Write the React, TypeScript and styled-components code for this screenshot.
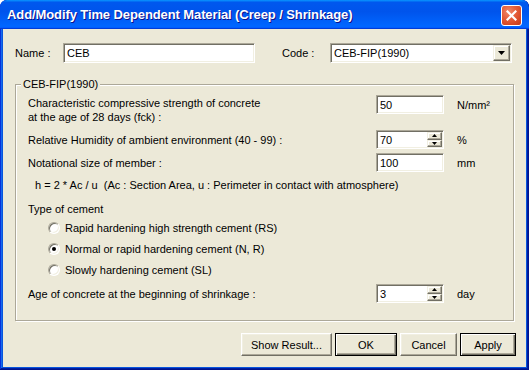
import React from "react";
import styled, { createGlobalStyle, css } from "styled-components";

const FONT = `"Liberation Sans", Arial, sans-serif`;

const Global = createGlobalStyle`
  html, body { margin: 0; padding: 0; background: #ffffff; }
  body { width: 529px; height: 370px; overflow: hidden; }
  * { box-sizing: border-box; }
`;

const Window = styled.div`
  width: 529px;
  height: 370px;
  display: flex;
  flex-direction: column;
  background: #0855dd;
  border-radius: 7px 7px 0 0;
  overflow: hidden;
  box-shadow: inset -1px -1px #00138c, inset 1px 1px #0831d9, inset -2px -2px #001ea0,
    inset 2px 2px #166aee;
  font-family: ${FONT};
  font-size: 11px;
  color: #000;
`;

const TitleBar = styled.div`
  height: 29px;
  flex: none;
  display: flex;
  align-items: center;
  padding: 0 7px 0 7px;
  background: linear-gradient(
    180deg,
    #0997ff,
    #0058ee 8%,
    #0054ec 40%,
    #0066ff 88%,
    #0066ff 93%,
    #005bff 95%,
    #003dd7 96%,
    #003dd7
  );
  border-radius: 7px 7px 0 0;
`;

const Title = styled.div`
  flex: 1;
  color: #fff;
  font-family: ${FONT};
  font-weight: bold;
  font-size: 13px;
  letter-spacing: -0.1px;
  text-shadow: 1px 1px #0f1089;
  white-space: nowrap;
  padding-bottom: 1px;
`;

const CloseButton = styled.div`
  width: 21px;
  height: 21px;
  border: 1px solid #fff;
  border-radius: 3px;
  display: flex;
  align-items: center;
  justify-content: center;
  background: radial-gradient(circle at 35% 30%, #f08a6c 0%, #e5603c 40%, #d84a27 70%, #c13a1a 100%);
  margin-top: 1px;
`;

const Body = styled.div`
  flex: 1;
  margin: 0 3px 3px 3px;
  background: #ece9d8;
  padding: 14px 0 0 12px;
  display: flex;
  flex-direction: column;
`;

const TopRow = styled.div`
  display: flex;
  align-items: center;
  height: 20px;
`;

const Label = styled.div<{ $w?: number; $ml?: number }>`
  width: ${(p) => (p.$w ? `${p.$w}px` : "auto")};
  margin-left: ${(p) => p.$ml ?? 0}px;
  white-space: nowrap;
  line-height: 14px;
`;

const sunken = css`
  background: #fff;
  border: 1px solid;
  border-color: #aca899 #ffffff #ffffff #aca899;
  box-shadow: inset 1px 1px #716f64, inset -1px -1px #f1efe2;
`;

const Edit = styled.div<{ $w: number; $h: number }>`
  ${sunken};
  width: ${(p) => p.$w}px;
  height: ${(p) => p.$h}px;
  display: flex;
  align-items: center;
  padding: 1px 1px 1px 3px;
  white-space: nowrap;
`;

const EditText = styled.span`
  flex: 1;
  line-height: 14px;
`;

const raised = css`
  background: #ece9d8;
  border: 1px solid;
  border-color: #f1efe2 #716f64 #716f64 #f1efe2;
  box-shadow: inset -1px -1px #aca899, inset 1px 1px #ffffff;
`;

const DropButton = styled.div`
  ${raised};
  width: 17px;
  height: 100%;
  display: flex;
  align-items: center;
  justify-content: center;
`;

const SpinColumn = styled.div`
  width: 15px;
  height: 100%;
  display: flex;
  flex-direction: column;
`;

const SpinButton = styled.div`
  ${raised};
  flex: 1;
  display: flex;
  align-items: center;
  justify-content: center;
`;

const Group = styled.div`
  position: relative;
  width: 499px;
  height: 237px;
  margin-top: 21px;
  border: 1px solid #aca899;
  box-shadow: 1px 1px 0 #ffffff, inset 1px 1px 0 #ffffff;
  padding: 10px 0 0 12px;
  display: flex;
  flex-direction: column;
`;

const Legend = styled.div`
  position: absolute;
  top: -8px;
  left: 5px;
  padding: 0 2px;
  background: #ece9d8;
  line-height: 14px;
`;

const FieldRow = styled.div<{ $mt?: number; $top?: boolean }>`
  display: grid;
  grid-template-columns: 348px 68px 1fr;
  align-items: ${(p) => (p.$top ? "start" : "center")};
  margin-top: ${(p) => p.$mt ?? 0}px;
`;

const FieldLabel = styled.div<{ $pt?: number }>`
  line-height: 14px;
  padding-top: ${(p) => p.$pt ?? 0}px;
  white-space: nowrap;
`;

const Unit = styled.div<{ $top?: boolean }>`
  padding-left: 13px;
  line-height: 14px;
  padding-top: ${(p) => (p.$top ? 3 : 0)}px;
`;

const TextLine = styled.div<{ $mt: number; $indent?: number }>`
  margin-top: ${(p) => p.$mt}px;
  padding-left: ${(p) => p.$indent ?? 0}px;
  line-height: 14px;
  white-space: pre;
`;

const RadioList = styled.div`
  margin-top: 1px;
  display: flex;
  flex-direction: column;
`;

const RadioRow = styled.div`
  height: 21px;
  display: flex;
  align-items: center;
  padding-left: 20px;
  gap: 5px;
`;

const RadioCircle = styled.span<{ $checked?: boolean }>`
  position: relative;
  width: 12px;
  height: 12px;
  border-radius: 50%;
  background: #fff;
  border: 1px solid;
  border-color: #aca899 #ffffff #ffffff #aca899;
  box-shadow: inset 1px 1px #716f64, inset -1px -1px #f1efe2;
  ${(p) =>
    p.$checked &&
    css`
      &::after {
        content: "";
        position: absolute;
        left: 3px;
        top: 3px;
        width: 4px;
        height: 4px;
        border-radius: 50%;
        background: #000;
      }
    `}
`;

const ButtonRow = styled.div`
  width: 501px;
  margin-top: 12px;
  display: flex;
  justify-content: flex-end;
  gap: 3px;
`;

const Button = styled.div<{ $w: number; $default?: boolean }>`
  width: ${(p) => p.$w}px;
  height: 23px;
  display: flex;
  align-items: center;
  justify-content: center;
  font-family: ${FONT};
  font-size: 11px;
  ${raised};
  border-color: #ffffff #716f64 #716f64 #ffffff;
  box-shadow: inset -1px -1px #aca899, inset 1px 1px #f1efe2;
  ${(p) =>
    p.$default &&
    css`
      border-color: #000;
      box-shadow: inset 1px 1px #ffffff, inset -1px -1px #716f64, inset -2px -2px #aca899;
    `}
`;

const DownArrow = ({ w = 7 }: { w?: number }) => (
  <svg width={w} height={(w + 1) / 2} viewBox={`0 0 ${w} ${(w + 1) / 2}`}>
    <polygon points={`0,0 ${w},0 ${w / 2},${(w + 1) / 2}`} fill="#000" />
  </svg>
);

const UpArrow = ({ w = 5 }: { w?: number }) => (
  <svg width={w} height={(w + 1) / 2} viewBox={`0 0 ${w} ${(w + 1) / 2}`}>
    <polygon points={`0,${(w + 1) / 2} ${w},${(w + 1) / 2} ${w / 2},0`} fill="#000" />
  </svg>
);

const Spinner = ({ value }: { value: string }) => (
  <Edit $w={68} $h={19}>
    <EditText>{value}</EditText>
    <SpinColumn>
      <SpinButton>
        <UpArrow w={5} />
      </SpinButton>
      <SpinButton>
        <DownArrow w={5} />
      </SpinButton>
    </SpinColumn>
  </Edit>
);

const cements = [
  { label: "Rapid hardening high strength cement (RS)", checked: false },
  { label: "Normal or rapid hardening cement (N, R)", checked: true },
  { label: "Slowly hardening cement (SL)", checked: false },
];

export default function App() {
  return (
    <>
      <Global />
      <Window>
        <TitleBar>
          <Title>Add/Modify Time Dependent Material (Creep / Shrinkage)</Title>
          <CloseButton>
            <svg width="11" height="11" viewBox="0 0 11 11">
              <path d="M1.5 1.5 L9.5 9.5 M9.5 1.5 L1.5 9.5" stroke="#fff" strokeWidth="2.2" strokeLinecap="square" />
            </svg>
          </CloseButton>
        </TitleBar>
        <Body>
          <TopRow>
            <Label $w={48}>Name :</Label>
            <Edit $w={192} $h={20}>
              <EditText>CEB</EditText>
            </Edit>
            <Label $w={48} $ml={27}>
              Code :
            </Label>
            <Edit $w={182} $h={20}>
              <EditText>CEB-FIP(1990)</EditText>
              <DropButton>
                <DownArrow w={7} />
              </DropButton>
            </Edit>
          </TopRow>

          <Group>
            <Legend>CEB-FIP(1990)</Legend>
            <FieldRow $top>
              <FieldLabel $pt={1}>
                Characteristic compressive strength of concrete
                <br />
                at the age of 28 days (fck) :
              </FieldLabel>
              <Edit $w={68} $h={19}>
                <EditText>50</EditText>
              </Edit>
              <Unit $top>N/mm²</Unit>
            </FieldRow>
            <FieldRow $mt={6}>
              <FieldLabel>Relative Humidity of ambient environment (40 - 99) :</FieldLabel>
              <Spinner value="70" />
              <Unit>%</Unit>
            </FieldRow>
            <FieldRow $mt={4}>
              <FieldLabel>Notational size of member :</FieldLabel>
              <Edit $w={68} $h={19}>
                <EditText>100</EditText>
              </Edit>
              <Unit>mm</Unit>
            </FieldRow>
            <TextLine $mt={6} $indent={7}>
              {"h = 2 * Ac / u  (Ac : Section Area, u : Perimeter in contact with atmosphere)"}
            </TextLine>
            <TextLine $mt={10}>Type of cement</TextLine>
            <RadioList>
              {cements.map((c) => (
                <RadioRow key={c.label}>
                  <RadioCircle $checked={c.checked} />
                  <span>{c.label}</span>
                </RadioRow>
              ))}
            </RadioList>
            <FieldRow $mt={4}>
              <FieldLabel>Age of concrete at the beginning of shrinkage :</FieldLabel>
              <Spinner value="3" />
              <Unit>day</Unit>
            </FieldRow>
          </Group>

          <ButtonRow>
            <Button $w={91}>Show Result...</Button>
            <Button $w={62} $default>
              OK
            </Button>
            <Button $w={57}>Cancel</Button>
            <Button $w={56} $default>
              Apply
            </Button>
          </ButtonRow>
        </Body>
      </Window>
    </>
  );
}
